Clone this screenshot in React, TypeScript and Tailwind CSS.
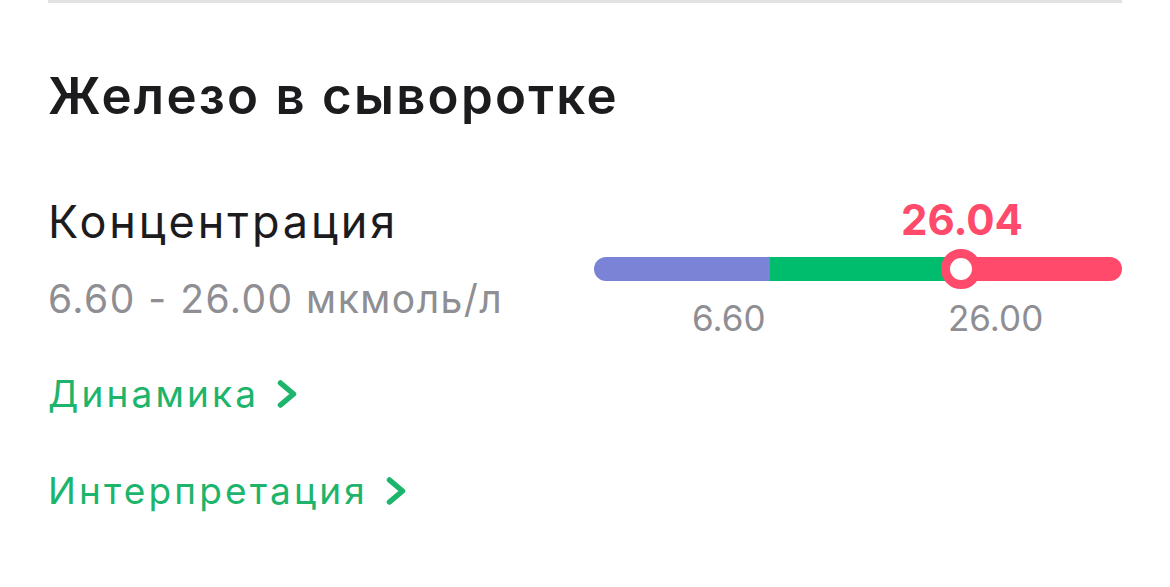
import React from 'react'

const font = { fontFamily: 'Inter, "Noto Sans", sans-serif' }

const Chevron = () => (
    <svg width="22" height="28" viewBox="0 0 22 28" className="ml-[18px]">
        <polyline
            points="3.5,3 16.5,14 3.5,25"
            fill="none"
            stroke="#1db46b"
            strokeWidth="5.5"
            strokeLinecap="round"
            strokeLinejoin="round"
        />
    </svg>
)

const RangeBar = () => {
    const knob = 367
    return (
        <div className="relative w-[528px]">
            {/* value above knob */}
            <div className="h-[50px] relative">
                <span
                    className="absolute top-[0px] -translate-x-1/2 text-[42px] leading-none font-bold text-[#ff4a6b]"
                    style={{ left: knob + 1 }}
                >
                    26.04
                </span>
            </div>
            {/* bar */}
            <div className="relative h-[24px] mt-[8px]">
                <div className="flex h-full rounded-full overflow-hidden">
                    <div className="w-[176px] bg-[#7b83d6]" />
                    <div className="w-[190px] bg-[#00bd6d]" />
                    <div className="flex-1 bg-[#ff4a6b]" />
                </div>
                <div
                    className="absolute top-1/2 -translate-x-1/2 -translate-y-1/2 w-[40px] h-[40px] rounded-full bg-white border-[9px] border-[#ff4a6b]"
                    style={{ left: knob }}
                />
            </div>
            {/* scale labels */}
            <div className="relative h-[40px] mt-[20px] text-[35px] leading-none text-[#8e8e93]">
                <span className="absolute left-[98px] top-0">6.60</span>
                <span className="absolute left-[354px] top-0">26.00</span>
            </div>
        </div>
    )
}

export default function App() {
    return (
        <div className="min-h-screen bg-white px-[48px]" style={font}>
            <div className="h-[3px] bg-[#e2e2e2]" />
            <h1 className="mt-[67px] text-[51px] leading-none font-semibold text-[#1c1c1e] tracking-[0.044em]">
                Железо в сыворотке
            </h1>
            <div className="flex justify-between mt-[78px]">
                <div>
                    <div className="text-[45px] leading-none text-[#1c1c1e] tracking-[0.065em]">
                        Концентрация
                    </div>
                    <div className="mt-[35px] text-[39px] leading-none text-[#8e8e93] tracking-[0.038em]">
                        6.60 - 26.00 мкмоль/л
                    </div>
                </div>
                <RangeBar />
            </div>
            <div className="mt-[34px] flex flex-col gap-[60px] text-[37px] leading-none text-[#1db46b] tracking-[0.085em]">
                <div className="flex items-center">
                    Динамика
                    <Chevron />
                </div>
                <div className="flex items-center">
                    Интерпретация
                    <Chevron />
                </div>
            </div>
        </div>
    )
}
